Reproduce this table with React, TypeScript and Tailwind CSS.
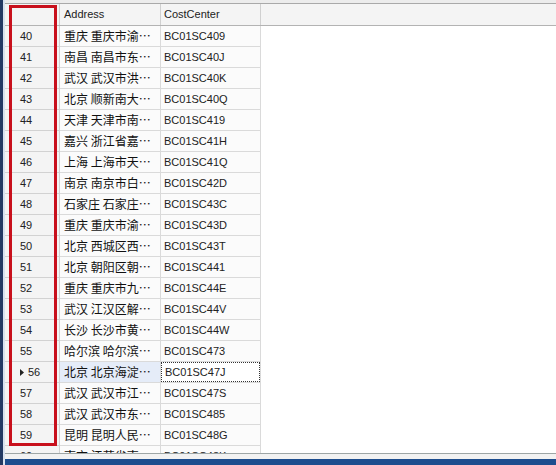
import React from "react";

type Row = { no: number; address: string; cost: string };

const rows: Row[] = [
  { no: 40, address: "重庆 重庆市渝…", cost: "BC01SC409" },
  { no: 41, address: "南昌 南昌市东…", cost: "BC01SC40J" },
  { no: 42, address: "武汉 武汉市洪…", cost: "BC01SC40K" },
  { no: 43, address: "北京 顺新南大…", cost: "BC01SC40Q" },
  { no: 44, address: "天津 天津市南…", cost: "BC01SC419" },
  { no: 45, address: "嘉兴 浙江省嘉…", cost: "BC01SC41H" },
  { no: 46, address: "上海 上海市天…", cost: "BC01SC41Q" },
  { no: 47, address: "南京 南京市白…", cost: "BC01SC42D" },
  { no: 48, address: "石家庄 石家庄…", cost: "BC01SC43C" },
  { no: 49, address: "重庆 重庆市渝…", cost: "BC01SC43D" },
  { no: 50, address: "北京 西城区西…", cost: "BC01SC43T" },
  { no: 51, address: "北京 朝阳区朝…", cost: "BC01SC441" },
  { no: 52, address: "重庆 重庆市九…", cost: "BC01SC44E" },
  { no: 53, address: "武汉 江汉区解…", cost: "BC01SC44V" },
  { no: 54, address: "长沙 长沙市黄…", cost: "BC01SC44W" },
  { no: 55, address: "哈尔滨 哈尔滨…", cost: "BC01SC473" },
  { no: 56, address: "北京 北京海淀…", cost: "BC01SC47J" },
  { no: 57, address: "武汉 武汉市江…", cost: "BC01SC47S" },
  { no: 58, address: "武汉 武汉市东…", cost: "BC01SC485" },
  { no: 59, address: "昆明 昆明人民…", cost: "BC01SC48G" },
  { no: 60, address: "南京 江苏省南…", cost: "BC01SC48K" },
];

const latin = "font-['Tahoma','Liberation_Sans',sans-serif]";
const cjk = "font-['Noto_Sans_CJK_SC','Liberation_Sans',sans-serif]";

const App = () => {
  const current = 56;

  return (
    <div className="w-[556px] h-[465px] flex bg-[#1d4d8e] overflow-hidden">
      {/* window frame, left side */}
      <div className="w-[3px] h-full bg-[#243a63]" />
      <div className="w-[2px] h-full bg-[#d9e2ee]" />

      <div className="flex-1 flex flex-col h-[459px] bg-[#ededed]">
        <div className="h-[4px] bg-[#ececec] border-b border-[#a9a9a9]" />

        <div className="relative flex-1 flex flex-col bg-white overflow-hidden">
          {/* header */}
          <div className={`flex h-[22px] shrink-0 bg-[#f4f4f4] border-b border-[#b3b3b3] text-[11px] text-[#222] ${latin}`}>
            <div className="w-[55px] border-r border-[#d0d0d0]" />
            <div className="w-[101px] border-r border-[#d0d0d0] pl-[4px] flex items-center">Address</div>
            <div className="w-[100px] border-r border-[#d0d0d0] pl-[3px] flex items-center">CostCenter</div>
            <div className="flex-1" />
          </div>

          {/* body */}
          <div className="flex-1 overflow-hidden">
            {rows.map(r => {
              const sel = r.no === current;
              return (
                <div key={r.no} className="flex h-[21px]">
                  <div className={`w-[55px] shrink-0 flex items-center pl-[15px] bg-[#f4f4f4] border-r border-b border-[#d2d2d2] text-[11px] text-[#222] ${latin}`}>
                    {sel ? (
                      <>
                        <svg width="4" height="7" viewBox="0 0 4 7" className="mr-[4px]">
                          <path d="M0 0 L4 3.5 L0 7 Z" fill="#222" />
                        </svg>
                        {r.no}
                      </>
                    ) : (
                      r.no
                    )}
                  </div>
                  <div className={`w-[101px] shrink-0 flex items-center pl-[4px] whitespace-nowrap overflow-hidden border-r border-b border-[#dadada] text-[12px] text-[#111] ${cjk} ${sel ? "bg-[#e5ecf8]" : "bg-[#fbfbfb]"}`}>
                    {r.address}
                  </div>
                  <div className={`w-[100px] shrink-0 flex border-r border-b border-[#dadada] ${sel ? "bg-white" : "bg-[#fbfbfb]"}`}>
                    <div className={`flex-1 flex items-center pl-[3px] text-[11px] text-[#222] ${latin} ${sel ? "border border-dotted border-[#333]" : ""}`}>
                      {r.cost}
                    </div>
                  </div>
                  <div className="flex-1 bg-white" />
                </div>
              );
            })}
          </div>

          {/* red highlight drawn over the row-number column */}
          <div className="absolute left-[4px] top-[1px] w-[48px] h-[441px] border-[3px] border-[#c8101c] pointer-events-none" />
        </div>

        <div className="h-[6px] shrink-0 bg-[#f2f2f2] border-t border-[#9ea6a6]" />
      </div>
    </div>
  );
};

export default App;
